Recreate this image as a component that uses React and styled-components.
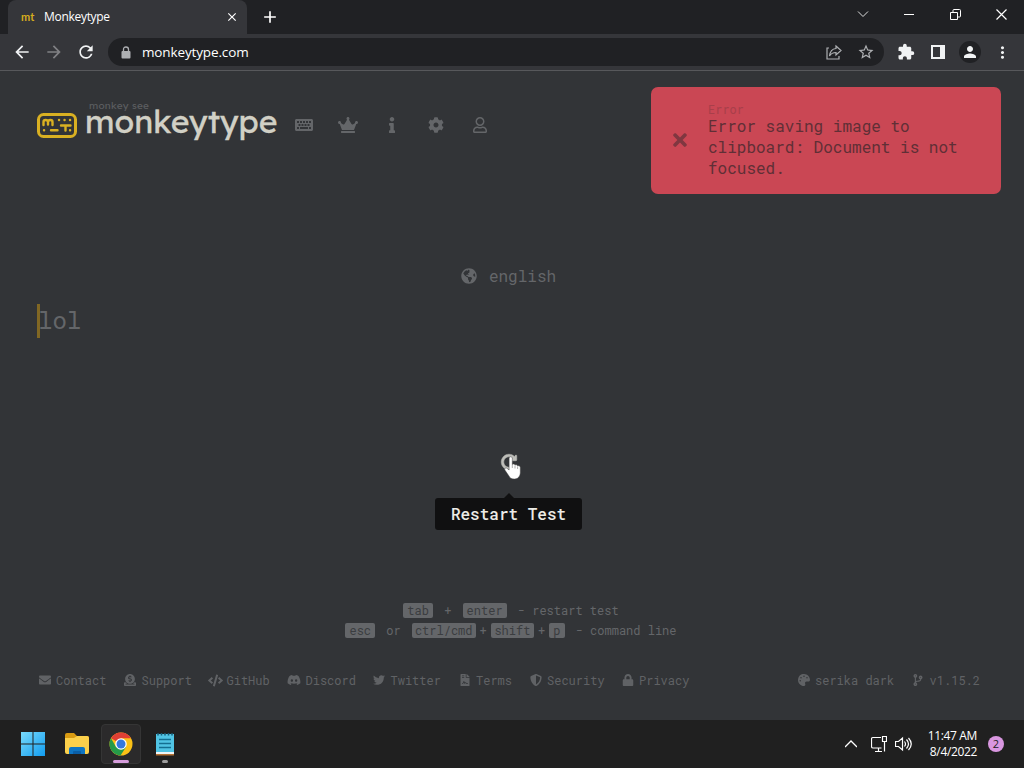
import React from "react";
import styled, { createGlobalStyle, css } from "styled-components";
import {
  FaKeyboard,
  FaCrown,
  FaInfo,
  FaCog,
  FaRegUser,
  FaTimes,
  FaGlobeAmericas,
  FaRedoAlt,
  FaEnvelope,
  FaDonate,
  FaCode,
  FaDiscord,
  FaTwitter,
  FaFileContract,
  FaShieldAlt,
  FaLock,
  FaPalette,
  FaCodeBranch,
} from "react-icons/fa";
import { MdArrowBack, MdArrowForward, MdRefresh, MdStarBorder, MdExtension, MdPerson, MdMoreVert, MdClose, MdAdd } from "react-icons/md";

const mono = `"Roboto Mono", "DejaVu Sans Mono", monospace`;
const sans = `"Segoe UI", "Open Sans", sans-serif`;

const GlobalStyle = createGlobalStyle`
  * {
    box-sizing: border-box;
  }
  body {
    margin: 0;
    background: #323437;
    overflow: hidden;
  }
  svg {
    display: block;
    flex-shrink: 0;
  }
`;

const Screen = styled.div`
  display: flex;
  flex-direction: column;
  width: 1024px;
  height: 768px;
  overflow: hidden;
`;

/* browser */

const TabStrip = styled.div`
  display: flex;
  align-items: center;
  height: 34px;
  padding-left: 8px;
  background: #202124;
  color: #fff;
`;

const Tab = styled.div`
  display: flex;
  align-items: center;
  width: 239px;
  height: 34px;
  padding: 0 8px 0 13px;
  border-radius: 8px 8px 0 0;
  background: #35363a;
  font: 12px ${sans};
  letter-spacing: -0.3px;
`;

const Favicon = styled.span`
  width: 23px;
  margin-top: -1px;
  color: #d5ac1d;
  font: 700 11px "Lato", sans-serif;
  letter-spacing: 0.1px;
`;

const TabTitle = styled.span`
  flex: 1;
  margin-top: -1px;
`;

const NewTab = styled.div`
  margin-left: 13px;
`;

const WindowControls = styled.div`
  display: flex;
  align-items: center;
  margin-left: auto;
`;

const WindowButton = styled.div`
  display: flex;
  justify-content: center;
  width: 46px;
  margin-top: -6px;
`;

const Toolbar = styled.div`
  display: flex;
  align-items: center;
  height: 37px;
  padding: 0 6px 0 12px;
  border-bottom: 1px solid #57585b;
  background: #35363a;
  color: #f1f3f4;
`;

const NavButton = styled.div`
  display: flex;
  width: 32px;
  color: ${(props) => (props.$off ? "#808184" : "#f1f3f4")};
`;

const AddressBar = styled.div`
  display: flex;
  align-items: center;
  flex: 1;
  height: 28px;
  padding: 0 9px 0 13px;
  border-radius: 14px;
  background: #202124;
  color: #aeb0b3;
`;

const Url = styled.span`
  flex: 1;
  margin-left: 11px;
  color: #fff;
  font: 13.5px ${sans};
  letter-spacing: -0.13px;
`;

const AddressActions = styled.div`
  display: flex;
  align-items: center;
  gap: 15px;
`;

const ToolbarActions = styled.div`
  display: flex;
  margin-left: 6px;
`;

const ToolbarButton = styled.div`
  display: flex;
  align-items: center;
  justify-content: center;
  width: 32px;
`;

const Avatar = styled.div`
  display: flex;
  align-items: center;
  justify-content: center;
  width: 22px;
  height: 22px;
  border-radius: 50%;
  background: #202124;
`;

/* page */

const Page = styled.main`
  position: relative;
  display: flex;
  flex-direction: column;
  height: 649px;
  padding: 0 37px;
  background: #323437;
  color: #646669;
  font-family: ${mono};
`;

const Header = styled.header`
  display: flex;
  align-items: center;
  height: 50px;
  margin-top: 29px;
`;

const Brand = styled.div`
  display: flex;
  flex-direction: column;
  width: 196.5px;
  margin-left: 8px;
  height: 50px;
  white-space: nowrap;
`;

const Slogan = styled.span`
  height: 10px;
  padding-left: 4px;
  color: #5b5d60;
  font: 10px/11px "Lexend Deca", "Open Sans", sans-serif;
  letter-spacing: 0.25px;
`;

const BrandName = styled.span`
  color: #d1d0c5;
  font: 32px/22px "Lexend Deca", "Lato", sans-serif;
  -webkit-text-stroke: 0.3px #d1d0c5;
`;

const Nav = styled.nav`
  display: flex;
  align-items: center;
`;

const NavItem = styled.div`
  display: flex;
  justify-content: center;
  width: 44px;
`;

const Language = styled.div`
  display: flex;
  align-items: center;
  justify-content: center;
  gap: 12px;
  height: 22px;
  margin-top: 114px;
  padding-right: 7px;
  font-size: 16px;

  svg {
    margin-top: 1px;
  }
`;

const Words = styled.div`
  display: flex;
  align-items: center;
  height: 34px;
  margin-top: 18px;
  padding-bottom: 2px;
  border-left: 3px solid #816723;
  font-size: 24px;
`;

const Word = styled.span`
  margin-left: -2px;
`;

const RestartArea = styled.div`
  position: relative;
  display: flex;
  justify-content: center;
  width: 147px;
  margin: 116px 0 0 398px;
  color: #bdbdb8;
`;

const RestartIcon = styled(FaRedoAlt)`
  overflow: visible;
  stroke: currentColor;
  stroke-width: 16px;
`;

const Tooltip = styled.div`
  position: absolute;
  top: 44px;
  left: 0;
  width: 147px;
  height: 32px;
  border-radius: 3px;
  background: #101011;
  color: #ecebe6;
  font-size: 16px;
  font-weight: 500;
  line-height: 32px;
  text-align: center;

  &::before {
    content: "";
    position: absolute;
    top: -5px;
    left: 69px;
    border: 5px solid transparent;
    border-top: 0;
    border-bottom-color: #101011;
  }
`;

const Cursor = styled.svg`
  position: absolute;
  top: 2px;
  left: 68px;
`;

const KeyTips = styled.div`
  margin-top: 130px;
  font-size: 12px;
`;

const TipRow = styled.div`
  display: flex;
  align-items: center;
  justify-content: center;
  height: 20px;
  padding-right: 6px;
  white-space: pre;
`;

const Key = styled.span`
  height: 15px;
  margin: 0 4px;
  padding: 0 ${(props) => props.$pad ?? 4}px;
  border-radius: 2px;
  background: #646669;
  color: #3b3d40;
  line-height: 15px;
`;

const Footer = styled.footer`
  display: flex;
  align-items: center;
  height: 20px;
  margin-top: 30px;
  padding: 0 7px 0 0;
  font-size: 12px;
  color: #606265;
`;

const FooterLink = styled.div`
  display: flex;
  align-items: center;
  gap: 4px;
  width: ${(props) => props.$width}px;
  ${(props) =>
    props.$right &&
    css`
      margin-left: auto;
    `}
`;

const FooterIcon = styled.span`
  display: flex;
  justify-content: center;
  width: 15px;
`;

const Notification = styled.div`
  position: absolute;
  top: 16px;
  right: 23px;
  display: flex;
  align-items: center;
  width: 350px;
  height: 107px;
  padding-left: 19px;
  border-radius: 7px;
  background: #ca4754;
  color: #602f36;
`;

const CloseIcon = styled(FaTimes)`
  margin-bottom: 1px;
  color: #803740;
`;

const NotificationText = styled.div`
  margin-left: 18px;
  padding-bottom: 1px;
  font-size: 16px;
  line-height: 21px;
`;

const NotificationTitle = styled.div`
  height: 13px;
  color: #a83f4a;
  font-size: 12px;
  line-height: 15px;
`;

/* taskbar */

const Taskbar = styled.div`
  display: flex;
  align-items: center;
  height: 48px;
  padding: 0 21px 0 13px;
  background: #202020;
  color: #fff;
`;

const TaskItem = styled.div`
  display: flex;
  flex-direction: column;
  align-items: center;
  justify-content: center;
  width: 40px;
  height: 40px;
  margin-right: 4px;
  border: 1px solid ${(props) => (props.$active ? "#353535" : "transparent")};
  border-radius: 4px;
  background: ${(props) => (props.$active ? "#2b2a2b" : "transparent")};
`;

const Indicator = styled.div`
  width: ${(props) => (props.$active ? 16 : 6)}px;
  height: 3px;
  margin: 4px 0 -7px;
  border-radius: 2px;
  background: ${(props) => (props.$active ? "#d69ddc" : "#9d9d9d")};
`;

const Tray = styled.div`
  display: flex;
  align-items: center;
  margin-left: auto;
`;

const TrayIcon = styled.div`
  margin-right: ${(props) => props.$gap}px;
`;

const Clock = styled.div`
  font: 12px/16px ${sans};
  letter-spacing: -0.35px;
  text-align: right;
`;

const Badge = styled.div`
  width: 16px;
  height: 16px;
  margin-left: 11px;
  margin-right: -1px;
  border-radius: 50%;
  background: #d997e0;
  color: #222;
  font: 11px/16px ${sans};
  text-align: center;
`;

const navItems = [
  { icon: FaKeyboard, size: 18 },
  { icon: FaCrown, size: 20 },
  { icon: FaInfo, size: 16 },
  { icon: FaCog, size: 16 },
  { icon: FaRegUser, size: 16 },
];

const links = [
  { label: "Contact", icon: FaEnvelope, width: 85.5 },
  { label: "Support", icon: FaDonate, width: 85 },
  { label: "GitHub", icon: FaCode, size: 15, width: 79 },
  { label: "Discord", icon: FaDiscord, size: 14, width: 85 },
  { label: "Twitter", icon: FaTwitter, width: 85.5 },
  { label: "Terms", icon: FaFileContract, width: 71 },
  { label: "Security", icon: FaShieldAlt, width: 92 },
  { label: "Privacy", icon: FaLock, width: 70 },
];

const Logo = () => (
  <svg width="40" height="25" viewBox="0 0 40 25" fill="none" stroke="#d9b022" strokeLinecap="round" strokeLinejoin="round">
    <rect x="1.5" y="1.5" width="37" height="22" rx="5" strokeWidth="3" />
    <path
      d="M6.500 12V9Q6.500 7 8.500 7Q11 7 11 9V11.500M11 9Q11 7 13.500 7Q15.500 7 15.500 9V12M22 7h.1M27.500 7h.1M33 7h.1M24 12.500h9.500M28.500 12.500V17.500M7 17.300h.1M14 17.300h6.500M33 17.300h.1"
      strokeWidth="2.400"
    />
  </svg>
);

const PadlockIcon = () => (
  <svg width="10" height="13" viewBox="0 0 10 13" fill="none">
    <path d="M2.500 6V3.500q0-2.500 2.500-2.500t2.500 2.500V6" stroke="#aeb0b3" strokeWidth="1.300" />
    <rect x=".5" y="5" width="9" height="7.500" rx="1" fill="#aeb0b3" />
  </svg>
);

const ShareIcon = () => (
  <svg width="16" height="16" viewBox="0 0 16 16" fill="none" stroke="currentColor" strokeWidth="1.2">
    <path d="M3 4H1v11h12v-3M10 2l5 4.500-5 4.500V8.500C7 8.500 5 9.500 3.500 12 4 7.500 6.500 4.800 10 4.500z" />
  </svg>
);

const HandCursor = () => (
  <Cursor width="19" height="24" viewBox="0 0 19 24">
    <path
      d="M6.100 2.500c0-2.300 3.200-2.300 3.200 0v6c.5-.8 2.500-.7 2.700.6.700-.7 2.400-.4 2.600.8.900-.5 2.700 0 2.700 1.500v5.200c0 3.600-2.300 6.500-6 6.500-3 0-4.400-1.200-5.500-3.300l-3.900-5.700c-.9-1.700 1-2.900 2.200-1.700l2 1.600z"
      fill="#fff"
      stroke="#444"
      strokeWidth=".5"
    />
    <path d="M9.300 8.500v3.500M12 9.500v3M14.600 10.500v2.500" stroke="#777" strokeWidth=".6" />
  </Cursor>
);

const WindowsLogo = () => (
  <svg width="24" height="24" viewBox="0 0 24 24">
    <defs>
      <linearGradient id="win" x1="0" y1="0" x2="1" y2="1">
        <stop offset="0" stopColor="#79dbfb" />
        <stop offset="1" stopColor="#119cf0" />
      </linearGradient>
    </defs>
    <path d="M0 0h11.500v11.500H0zM12.500 0H24v11.500H12.500zM0 12.500h11.500V24H0zM12.500 12.500H24V24H12.500z" fill="url(#win)" />
  </svg>
);

const FolderIcon = () => (
  <svg width="26" height="24" viewBox="0 0 26 24">
    <path d="M1 3q0-2 2-2h7l3 3h10q2 0 2 2v5H1z" fill="#d99b12" />
    <path d="M1 6h9l3-2h10q2 0 2 2v14q0 2-2 2H3q-2 0-2-2z" fill="#fbd04b" />
    <path d="M5 22v-5q0-2 2-2h12q2 0 2 2v5z" fill="#0e75c3" />
    <path d="M9 22v-2q0-1 1-1h6q1 0 1 1v2z" fill="#0a5ea6" />
  </svg>
);

const ChromeIcon = () => (
  <svg width="24" height="24" viewBox="0 0 24 24">
    <circle cx="12" cy="12" r="11.500" fill="#fbc116" />
    <path d="M12 12L2 6.250A11.500 11.500 0 0 1 22 6.250H12z" fill="#df3f34" />
    <path d="M2 6.250A11.500 11.500 0 0 0 11.500 23.500l5.500-8.600L12 12 7 14.900z" fill="#259a49" />
    <circle cx="12" cy="12" r="5.750" fill="#fff" />
    <circle cx="12" cy="12" r="4.500" fill="#3478de" />
  </svg>
);

const NotepadIcon = () => (
  <svg width="20" height="24" viewBox="0 0 20 24">
    <path d="M1 2h18v19H1z" fill="#50c4e4" />
    <path d="M1 20h18v2H1z" fill="#edf5f7" />
    <path d="M1 22h18v1.500H1z" fill="#b57235" />
    <path d="M3 1v2.500M6.500 1v2.500M10 1v2.500M13.500 1v2.500M17 1v2.500" stroke="#175b76" strokeWidth="1.500" />
    <path d="M4 7.500h12M4 11.500h12M4 15.500h12" stroke="#146f91" strokeWidth="1.600" />
  </svg>
);

const Browser = () => (
  <>
    <TabStrip>
      <Tab>
        <Favicon>mt</Favicon>
        <TabTitle>Monkeytype</TabTitle>
        <MdClose size={14} />
      </Tab>
      <NewTab>
        <MdAdd size={20} />
      </NewTab>
      <WindowControls>
        <WindowButton>
          <svg width="12" height="12" fill="none" stroke="#ddd">
            <path d="M1 3.500l5 5 5-5" />
          </svg>
        </WindowButton>
        <WindowButton>
          <svg width="10" height="12" stroke="#fff">
            <path d="M0 6.500h10" />
          </svg>
        </WindowButton>
        <WindowButton>
          <svg width="11" height="11" fill="none" stroke="#fff">
            <path d="M.5 3.500h7v7h-7zM3 3V1.500Q3 .5 4 .5h5.500q1 0 1 1V7q0 1-1 1H8" />
          </svg>
        </WindowButton>
        <WindowButton>
          <svg width="11" height="11" stroke="#fff" strokeWidth="1.200">
            <path d="M.5.5l10 10M10.500.5l-10 10" />
          </svg>
        </WindowButton>
      </WindowControls>
    </TabStrip>
    <Toolbar>
      <NavButton>
        <MdArrowBack size={20} />
      </NavButton>
      <NavButton $off>
        <MdArrowForward size={20} />
      </NavButton>
      <NavButton>
        <MdRefresh size={20} />
      </NavButton>
      <AddressBar>
        <PadlockIcon />
        <Url>monkeytype.com</Url>
        <AddressActions>
          <ShareIcon />
          <MdStarBorder size={18} />
        </AddressActions>
      </AddressBar>
      <ToolbarActions>
        <ToolbarButton>
          <MdExtension size={18} />
        </ToolbarButton>
        <ToolbarButton>
          <svg width="16" height="16" fill="none" stroke="#f1f3f4">
            <rect x="2" y="2" width="12" height="12" strokeWidth="2" />
            <path d="M12.500 1v14" strokeWidth="5" />
          </svg>
        </ToolbarButton>
        <ToolbarButton>
          <Avatar>
            <MdPerson size={18} />
          </Avatar>
        </ToolbarButton>
        <ToolbarButton>
          <MdMoreVert size={19} />
        </ToolbarButton>
      </ToolbarActions>
    </Toolbar>
  </>
);

const App = () => {
  return (
    <Screen>
      <GlobalStyle />
      <Browser />
      <Page>
        <Header>
          <Logo />
          <Brand>
            <Slogan>monkey see</Slogan>
            <BrandName>monkeytype</BrandName>
          </Brand>
          <Nav>
            {navItems.map(({ icon: Icon, size }, i) => (
              <NavItem key={i}>
                <Icon size={size} />
              </NavItem>
            ))}
          </Nav>
        </Header>
        <Language>
          <FaGlobeAmericas />
          english
        </Language>
        <Words>
          <Word>lol</Word>
        </Words>
        <RestartArea>
          <RestartIcon size={16} />
          <HandCursor />
          <Tooltip>Restart Test</Tooltip>
        </RestartArea>
        <KeyTips>
          <TipRow>
            <Key>tab</Key>
            {" + "}
            <Key>enter</Key>
            {" - restart test"}
          </TipRow>
          <TipRow>
            <Key>esc</Key>
            {" or "}
            <Key $pad={3}>ctrl/cmd</Key>+<Key $pad={3.7}>shift</Key>+<Key>p</Key>
            {" - command line"}
          </TipRow>
        </KeyTips>
        <Footer>
          {links.map(({ label, icon: Icon, size = 12, width }) => (
            <FooterLink key={label} $width={width}>
              <FooterIcon>
                <Icon size={size} />
              </FooterIcon>
              {label}
            </FooterLink>
          ))}
          <FooterLink $width={115} $right>
            <FooterIcon>
              <FaPalette />
            </FooterIcon>
            serika dark
          </FooterLink>
          <FooterLink $width={69}>
            <FooterIcon>
              <FaCodeBranch />
            </FooterIcon>
            v1.15.2
          </FooterLink>
        </Footer>
        <Notification>
          <CloseIcon size={20} />
          <NotificationText>
            <NotificationTitle>Error</NotificationTitle>
            Error saving image to
            <br />
            clipboard: Document is not
            <br />
            focused.
          </NotificationText>
        </Notification>
      </Page>
      <Taskbar>
        <TaskItem>
          <WindowsLogo />
        </TaskItem>
        <TaskItem>
          <FolderIcon />
        </TaskItem>
        <TaskItem $active>
          <ChromeIcon />
          <Indicator $active />
        </TaskItem>
        <TaskItem>
          <NotepadIcon />
          <Indicator />
        </TaskItem>
        <Tray>
          <TrayIcon $gap={14}>
            <svg width="12" height="8" fill="none" stroke="#fff" strokeWidth="1.300">
              <path d="M0 7l6-6 6 6" />
            </svg>
          </TrayIcon>
          <TrayIcon $gap={8}>
            <svg width="16" height="16" fill="none" stroke="#fff" strokeWidth="1.200">
              <path d="M10 1.500H2Q.5 1.500.5 3v7.500q0 1.500 1.500 1.500h8.500M7.500 12v3M4 15.500h7M11.500.5h4v5h-4zM13.500 5.500v10" />
            </svg>
          </TrayIcon>
          <TrayIcon $gap={16}>
            <svg width="17" height="16" fill="none" stroke="#fff" strokeWidth="1.200">
              <path d="M.5 5.500h3l4-3.500v12l-4-3.500h-3zM9.500 5.500q2 2.500 0 5M11.500 3.500q4 4.500 0 9M13.500 2q5.500 6 0 12" />
            </svg>
          </TrayIcon>
          <Clock>
            11:47 AM
            <br />
            8/4/2022
          </Clock>
          <Badge>2</Badge>
        </Tray>
      </Taskbar>
    </Screen>
  );
};

export default App;
